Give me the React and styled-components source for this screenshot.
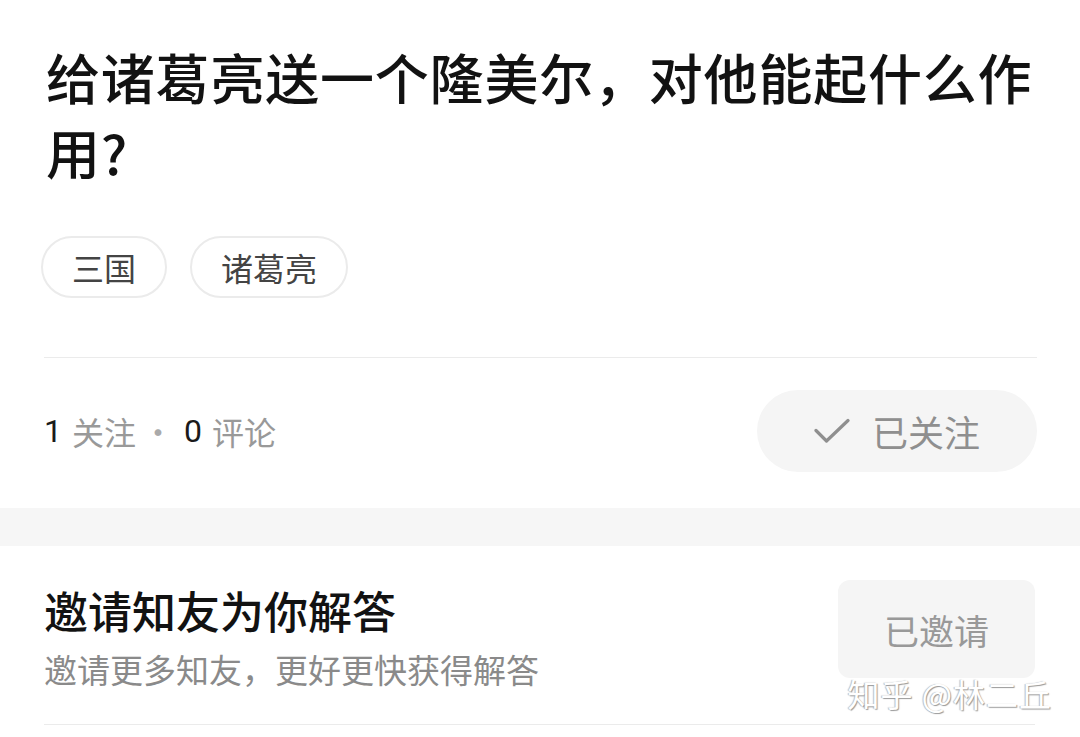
import React from "react";
import styled, { createGlobalStyle } from "styled-components";

const GlobalStyle = createGlobalStyle`
  html, body {
    margin: 0;
    padding: 0;
    background: #fff;
  }
  body {
    font-family: "Noto Sans CJK SC", "Noto Sans", sans-serif;
    color: #1a1a1a;
  }
`;

const tags = ["三国", "诸葛亮"];

const CheckIcon = () => (
  <svg width="36" height="26" viewBox="0 0 36 26" fill="none">
    <path
      d="M2 12.5 L12.5 23 L34 2.5"
      stroke="#8f8f8f"
      strokeWidth="3.2"
      strokeLinecap="round"
      strokeLinejoin="round"
    />
  </svg>
);

export default function App() {
  return (
    <Page>
      <GlobalStyle />
      <Question>
        <Title>给诸葛亮送一个隆美尔，对他能起什么作用?</Title>
        <TagList>
          {tags.map((t) => (
            <Tag key={t}>{t}</Tag>
          ))}
        </TagList>
        <Divider />
        <StatsRow>
          <Stats>
            <Num>1</Num>
            <Label>关注</Label>
            <Dot>·</Dot>
            <Num>0</Num>
            <Label>评论</Label>
          </Stats>
          <FollowButton>
            <CheckIcon />
            <span>已关注</span>
          </FollowButton>
        </StatsRow>
      </Question>
      <Band />
      <Invite>
        <InviteText>
          <InviteTitle>邀请知友为你解答</InviteTitle>
          <InviteSub>邀请更多知友，更好更快获得解答</InviteSub>
        </InviteText>
        <InviteButton>已邀请</InviteButton>
      </Invite>
      <Watermark>知乎 @林二丘</Watermark>
    </Page>
  );
}

const Page = styled.div`
  position: relative;
  width: 1080px;
  height: 737px;
  overflow: hidden;
  background: #fff;
`;

const Question = styled.section`
  padding: 39px 43px 36px 44px;
`;

const Title = styled.h1`
  margin: 0 0 0 2px;
  font-size: 54px;
  line-height: 75px;
  font-weight: 500;
  letter-spacing: 0.8px;
  color: #121212;
`;

const TagList = styled.div`
  display: flex;
  gap: 23px;
  margin-top: 47px;
  margin-left: -3px;
`;

const Tag = styled.span`
  display: inline-flex;
  align-items: center;
  height: 62px;
  box-sizing: border-box;
  padding: 0 29px;
  border: 2px solid #ebebeb;
  border-radius: 31px;
  font-size: 32px;
  color: #444;
`;

const Divider = styled.div`
  height: 1px;
  background: #ebebeb;
  margin-top: 59px;
`;

const StatsRow = styled.div`
  display: flex;
  align-items: center;
  justify-content: space-between;
  margin-top: 32px;
`;

const Stats = styled.div`
  display: flex;
  align-items: center;
  font-size: 32px;
`;

const Num = styled.span`
  font-family: Roboto, "Noto Sans CJK SC", sans-serif;
  color: #1a1a1a;
  margin-right: 10px;
`;

const Label = styled.span`
  color: #999;
`;

const Dot = styled.span`
  color: #aaa;
  margin: 0 10px 0 6px;
`;

const FollowButton = styled.div`
  display: flex;
  align-items: center;
  justify-content: center;
  gap: 22px;
  width: 280px;
  height: 82px;
  border-radius: 41px;
  background: #f5f5f5;
  font-size: 36px;
  color: #8f8f8f;
`;

const Band = styled.div`
  height: 38px;
  background: #f6f6f6;
`;

const Invite = styled.section`
  display: flex;
  align-items: flex-start;
  justify-content: space-between;
  margin: 0 45px 0 44px;
  padding: 34px 0 33px;
  border-bottom: 1px solid #ebebeb;
`;

const InviteText = styled.div`
  padding-top: 2px;
`;

const InviteTitle = styled.div`
  font-size: 44px;
  line-height: 56px;
  font-weight: 500;
  color: #121212;
`;

const InviteSub = styled.div`
  margin-top: 9px;
  font-size: 33px;
  line-height: 44px;
  color: #8a8a8a;
`;

const InviteButton = styled.div`
  display: flex;
  align-items: center;
  justify-content: center;
  width: 197px;
  height: 98px;
  border-radius: 12px;
  background: #f5f5f5;
  font-size: 35px;
  color: #999;
`;

const Watermark = styled.div`
  position: absolute;
  right: 28px;
  bottom: 24px;
  font-size: 32px;
  line-height: 40px;
  color: #fff;
  text-shadow: 1px 1px 1px #999, -1px 0 1px #bbb;
  letter-spacing: 1px;
`;
